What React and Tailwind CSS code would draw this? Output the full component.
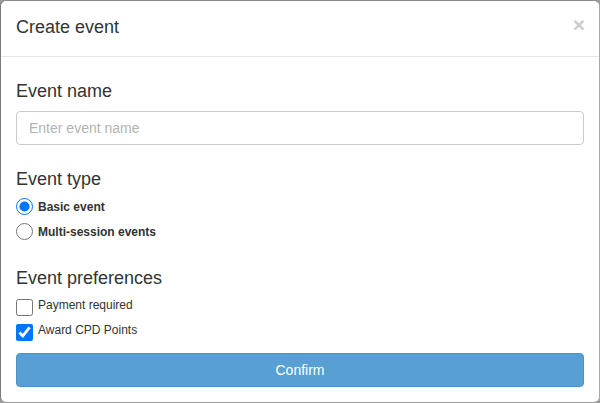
import React from "react";

export default function App() {
  return (
    <div className="w-[600px] h-[403px] bg-[#9a9a9a] overflow-hidden" style={{ fontFamily: '"Liberation Sans", Arial, sans-serif' }}>
      <div className="w-[600px] h-[403px] bg-white rounded-[6px] border border-t-[#8a8a8a] border-l-[#7a7a7a] border-r-[#a8a8a8] border-b-[#9a9a9a] flex flex-col">
        <div className="h-[56px] shrink-0 flex items-center justify-between pl-[15px] pr-[14px] border-b border-[#e5e5e5]">
          <h4 className="text-[18px] leading-[20px] text-[#333] mt-[-3px]">Create event</h4>
          <span className="text-[21px] font-bold leading-none text-[#cccccc] mt-[-8px]">×</span>
        </div>
        <div className="px-[15px] pt-[24px] flex flex-col">
          <div className="text-[18px] leading-[20px] text-[#333]">Event name</div>
          <input
            className="mt-[10px] h-[34px] w-full rounded-[4px] border border-[#ccc] px-[12px] text-[14px] text-[#555] placeholder:text-[#b3b3b3] outline-none"
            placeholder="Enter event name"
          />
          <div className="mt-[24px] text-[18px] leading-[20px] text-[#333]">Event type</div>
          <div className="mt-[5px] flex flex-col">
            <label className="h-[25px] flex items-center gap-[5px]">
              <input type="radio" name="t" defaultChecked className="m-0 w-[17px] h-[17px] accent-[#0075ff]" />
              <span className="text-[12px] font-bold text-[#333]">Basic event</span>
            </label>
            <label className="h-[25px] flex items-center gap-[5px]">
              <input type="radio" name="t" className="m-0 w-[17px] h-[17px]" />
              <span className="text-[12px] font-bold text-[#333]">Multi-session events</span>
            </label>
          </div>
          <div className="mt-[24px] text-[18px] leading-[20px] text-[#333]">Event preferences</div>
          <div className="mt-[7px] flex flex-col">
            <label className="h-[25px] flex items-center gap-[5px]">
              <input type="checkbox" className="m-0 w-[17px] h-[17px]" />
              <span className="text-[12px] text-[#333] mt-[-5px]">Payment required</span>
            </label>
            <label className="h-[25px] flex items-center gap-[5px]">
              <input type="checkbox" defaultChecked className="m-0 w-[17px] h-[17px] accent-[#0075ff]" />
              <span className="text-[12px] text-[#333] mt-[-5px]">Award CPD Points</span>
            </label>
          </div>
          <button className="mt-[8px] h-[34px] w-full rounded-[4px] bg-[#589fd4] border border-[#4b93cc] text-white text-[14px]">
            Confirm
          </button>
        </div>
      </div>
    </div>
  );
}
